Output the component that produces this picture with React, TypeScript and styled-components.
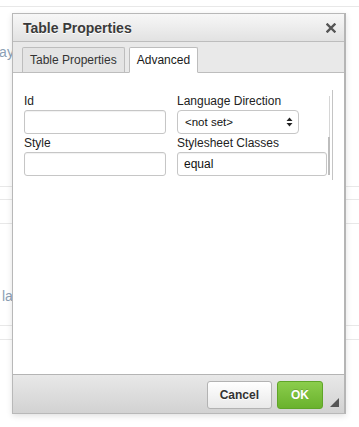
import React from "react";
import styled, { createGlobalStyle } from "styled-components";

const Global = createGlobalStyle`
  html, body { margin: 0; padding: 0; background: #fff; }
  body { font-family: "Liberation Sans", Arial, sans-serif; }
`;

const Page = styled.div`
  position: relative;
  width: 359px;
  height: 427px;
  overflow: hidden;
  background: #fff;
`;

const Backdrop = styled.div`
  display: flex;
  flex-direction: column;
`;

const Rule = styled.div<{ $gap: number }>`
  margin-top: ${(p) => p.$gap}px;
  height: 1px;
  background: #e8e8e8;
`;

const FaintText = styled.div<{ $gap: number; $shift: number }>`
  margin-top: ${(p) => p.$gap}px;
  margin-left: ${(p) => p.$shift}px;
  font-size: 14px;
  line-height: 14px;
  color: #8c9fb5;
`;

const Dialog = styled.div`
  position: absolute;
  left: 12px;
  top: 13px;
  width: 331px;
  height: 399px;
  display: flex;
  flex-direction: column;
  border: 1px solid #b8b8b8;
  border-right: 2px solid #b5b5b5;
  box-shadow: 0 2px 6px rgba(0, 0, 0, 0.12);
  background: #fff;
`;

const TitleBar = styled.div`
  height: 27px;
  display: flex;
  align-items: center;
  justify-content: space-between;
  padding: 0 8px 0 10px;
  background: linear-gradient(#f7f7f7, #e2e2e2);
  border-bottom: 1px solid #bdbdbd;
`;

const Title = styled.span`
  font-size: 14px;
  font-weight: bold;
  color: #3a3a3a;
  text-shadow: 0 1px 0 #fff;
`;

const CloseIcon = styled.svg`
  width: 10px;
  height: 10px;
`;

const TabBar = styled.div`
  height: 30px;
  display: flex;
  align-items: flex-end;
  gap: 4px;
  padding-left: 9px;
  background: #e9e9e9;
  border-bottom: 1px solid #bdbdbd;
`;

const Tab = styled.div<{ $active?: boolean }>`
  height: 24px;
  margin-bottom: ${(p) => (p.$active ? "-1px" : "0")};
  padding: 0 7px;
  display: flex;
  align-items: center;
  font-size: 12px;
  color: ${(p) => (p.$active ? "#1a1a1a" : "#333")};
  background: ${(p) => (p.$active ? "#fff" : "#e4e4e4")};
  border: 1px solid #bdbdbd;
  border-bottom: ${(p) => (p.$active ? "1px solid #fff" : "none")};
  border-radius: 2px 2px 0 0;
`;

const Body = styled.div`
  position: relative;
  flex: 1;
  padding: 21px 0 0 11px;
`;

const FieldGrid = styled.div`
  display: grid;
  grid-template-columns: 142px 150px;
  column-gap: 11px;
  row-gap: 2px;
`;

const Field = styled.div`
  display: flex;
  flex-direction: column;
  gap: 2px;
`;

const Label = styled.label`
  font-size: 12px;
  line-height: 14px;
  color: #222;
`;

const TextInput = styled.div<{ $width: number }>`
  box-sizing: border-box;
  width: ${(p) => p.$width}px;
  height: 24px;
  padding: 0 6px;
  display: flex;
  align-items: center;
  font-size: 12px;
  color: #111;
  background: #fff;
  border: 1px solid #c6c6c6;
  border-radius: 3px;
  box-shadow: inset 0 1px 1px rgba(0, 0, 0, 0.06);
`;

const Select = styled.div`
  box-sizing: border-box;
  width: 122px;
  height: 24px;
  padding: 0 5px 0 7px;
  display: flex;
  align-items: center;
  justify-content: space-between;
  font-size: 11.5px;
  color: #111;
  background: #fff;
  border: 1px solid #c6c6c6;
  border-radius: 4px;
`;

const Scroll = styled.div`
  position: absolute;
  left: 315px;
  top: 17px;
  width: 5px;
  height: 90px;
`;

const ScrollLine = styled.div<{ $x: number; $top: number; $h: number; $w: number; $c: string }>`
  position: absolute;
  left: ${(p) => p.$x}px;
  top: ${(p) => p.$top}px;
  width: ${(p) => p.$w}px;
  height: ${(p) => p.$h}px;
  background: ${(p) => p.$c};
`;

const Footer = styled.div`
  position: relative;
  height: 38px;
  display: flex;
  align-items: center;
  justify-content: flex-end;
  gap: 5px;
  padding-right: 21px;
  background: linear-gradient(#e8e8e8, #d2d2d2);
  border-top: 1px solid #b4b4b4;
`;

const Button = styled.button<{ $primary?: boolean }>`
  box-sizing: border-box;
  height: 28px;
  margin-top: 1px;
  padding: 0 ${(p) => (p.$primary ? "13px" : "12px")};
  font-family: "Liberation Sans", Arial, sans-serif;
  font-size: 12px;
  font-weight: bold;
  border-radius: 3px;
  color: ${(p) => (p.$primary ? "#fff" : "#333")};
  text-shadow: ${(p) => (p.$primary ? "0 -1px 0 rgba(0,0,0,0.15)" : "0 1px 0 #fff")};
  background: ${(p) =>
    p.$primary ? "linear-gradient(#8bcd4c, #6ab22d)" : "linear-gradient(#ffffff, #e9e9e9)"};
  border: 1px solid ${(p) => (p.$primary ? "#5fa528" : "#b3b3b3")};
`;

const Grip = styled.svg`
  position: absolute;
  right: 5px;
  bottom: 6px;
  width: 9px;
  height: 9px;
`;

export default function App() {
  return (
    <Page>
      <Global />
      <Backdrop>
        <Rule $gap={6} />
        <FaintText $gap={38} $shift={-4}>lay</FaintText>
        <Rule $gap={127} />
        <Rule $gap={12} />
        <Rule $gap={23} />
        <FaintText $gap={65} $shift={2}>la</FaintText>
        <Rule $gap={22} />
        <Rule $gap={13} />
      </Backdrop>
      <Dialog>
        <TitleBar>
          <Title>Table Properties</Title>
          <CloseIcon viewBox="0 0 10 10">
            <path d="M1.5 1.5 L8.5 8.5 M8.5 1.5 L1.5 8.5" stroke="#555" strokeWidth="2.4" strokeLinecap="square" />
          </CloseIcon>
        </TitleBar>
        <TabBar>
          <Tab>Table Properties</Tab>
          <Tab $active>Advanced</Tab>
        </TabBar>
        <Body>
          <FieldGrid>
            <Field>
              <Label>Id</Label>
              <TextInput $width={142} />
            </Field>
            <Field>
              <Label>Language Direction</Label>
              <Select>
                <span>&lt;not set&gt;</span>
                <svg width="7" height="10" viewBox="0 0 7 10">
                  <path d="M3.5 0.5 L6.5 4 L0.5 4 Z M0.5 6 L6.5 6 L3.5 9.5 Z" fill="#222" />
                </svg>
              </Select>
            </Field>
            <Field>
              <Label>Style</Label>
              <TextInput $width={142} />
            </Field>
            <Field>
              <Label>Stylesheet Classes</Label>
              <TextInput $width={150}>equal</TextInput>
            </Field>
          </FieldGrid>
          <Scroll>
            <ScrollLine $x={4} $top={0} $h={90} $w={1} $c="#c4c4c4" />
            <ScrollLine $x={1} $top={6} $h={79} $w={1} $c="#d6d6d6" />
            <ScrollLine $x={0} $top={47} $h={38} $w={2} $c="#bdbdbd" />
          </Scroll>
        </Body>
        <Footer>
          <Button>Cancel</Button>
          <Button $primary>OK</Button>
          <Grip viewBox="0 0 9 9">
            <path d="M9 0 L9 9 L0 9 Z" fill="#555" />
          </Grip>
        </Footer>
      </Dialog>
    </Page>
  );
}
